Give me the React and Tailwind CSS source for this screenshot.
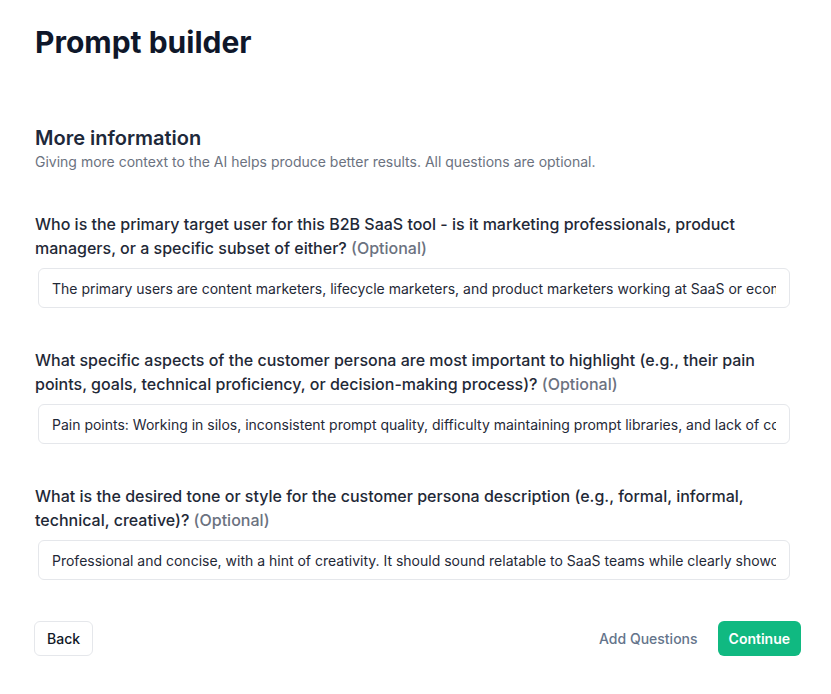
import { useState } from 'react';

const questions = [
  {
    id: 'q1',
    label:
      'Who is the primary target user for this B2B SaaS tool - is it marketing professionals, product managers, or a specific subset of either?',
    answer:
      'The primary users are content marketers, lifecycle marketers, and product marketers working at SaaS or ecommerce companies who need consistent, high-quality AI prompts.',
  },
  {
    id: 'q2',
    label:
      'What specific aspects of the customer persona are most important to highlight (e.g., their pain points, goals, technical proficiency, or decision-making process)?',
    answer:
      'Pain points: Working in silos, inconsistent prompt quality, difficulty maintaining prompt libraries, and lack of collaboration features across teams.',
  },
  {
    id: 'q3',
    label:
      'What is the desired tone or style for the customer persona description (e.g., formal, informal, technical, creative)?',
    answer:
      'Professional and concise, with a hint of creativity. It should sound relatable to SaaS teams while clearly showcasing the value of the product.',
  },
];

const App = () => {
  const [answers, setAnswers] = useState(
    Object.fromEntries(questions.map((q) => [q.id, q.answer]))
  );

  return (
    <div className="min-h-screen bg-white px-[35px] pt-6 text-[#111827] font-['Inter',sans-serif]">
      <h1 className="text-3xl font-bold leading-9 text-[#0f172a]">Prompt builder</h1>

      {/* Section header */}
      <div className="mt-16">
        <h2 className="text-xl font-semibold leading-7 text-[#1e293b]">More information</h2>
        <p className="text-sm text-[#6b7280]">
          Giving more context to the AI helps produce better results. All questions are optional.
        </p>
      </div>

      {/* Questions */}
      <div className="mt-10 flex flex-col gap-10 w-[766px]">
        {questions.map((q) => (
          <div key={q.id} className="flex flex-col gap-2">
            <label htmlFor={q.id} className="text-base font-medium leading-6 text-[#1f2937]">
              {q.label} <span className="text-[#6b7280]">(Optional)</span>
            </label>
            <input
              id={q.id}
              type="text"
              value={answers[q.id]}
              onChange={(e) => setAnswers({ ...answers, [q.id]: e.target.value })}
              className="ml-[3px] mr-[11px] h-10 rounded-md border border-[#e5e7eb] bg-white px-[13px] text-sm text-[#1f2937] outline-none"
            />
          </div>
        ))}
      </div>

      {/* Footer actions */}
      <div className="mt-[41px] ml-[-1px] flex w-[767px] items-center justify-between">
        <button
          type="button"
          className="h-[35px] rounded-md border border-[#e5e7eb] bg-white px-3 text-sm font-medium text-[#111827]"
        >
          Back
        </button>
        <div className="flex items-center gap-5">
          <button type="button" className="text-sm font-medium text-[#64748b]">
            Add Questions
          </button>
          <button
            type="button"
            className="h-[35px] rounded-md bg-[#10b981] px-[11px] text-sm font-semibold text-white"
          >
            Continue
          </button>
        </div>
      </div>
    </div>
  );
};

export default App;
